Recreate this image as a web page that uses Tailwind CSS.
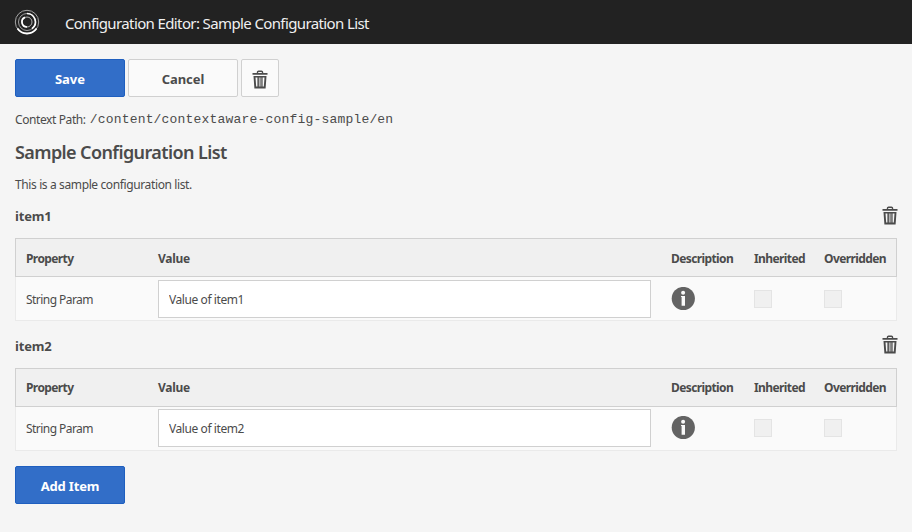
<!DOCTYPE html>
<html lang="en">
<head>
<meta charset="utf-8">
<title>Configuration Editor</title>
<script src="https://cdn.jsdelivr.net/npm/@tailwindcss/browser@4"></script>
</head>
<body class="h-[532px] overflow-hidden bg-[#f5f5f5] font-['Noto_Sans','Open_Sans',sans-serif] text-[12px] text-[#4b4b4b]">
<svg class="hidden">
  <symbol id="trash" viewBox="0 0 16 19">
    <path fill="currentColor" fill-rule="evenodd" d="M.5 3h4.300V2A1.700 1.700 0 0 1 6.500.4h3A1.700 1.700 0 0 1 11.200 2v1h4.300v1.800H.5zM6.200 3h3.600V1.900H6.200zM1.500 6h13l-.9 12.400H2.400zM3.500 7.500l.7 9h1.200v-9zm3.400 0v9h.7v-9zm1.700 0v9h.7v-9zm2 0v9h1.200l.7-9z"/>
  </symbol>
  <symbol id="info" viewBox="0 0 24 24">
    <circle cx="12.300" cy="11.500" r="11.600" fill="#636363"/>
    <circle cx="12.100" cy="5.700" r="2" fill="#fafafa"/>
    <path fill="#fafafa" d="M10 8.900h4v9.900h-3.400v-8.700H10z"/>
  </symbol>
</svg>
<header class="flex h-11 items-center bg-[#222] pl-[14px] text-[#f0f0f0]">
  <svg class="size-[26px]" viewBox="0 0 26 26" fill="none">
    <circle cx="13" cy="13" r="11.700" stroke="#a5a5a5" stroke-width="1"/>
    <path d="M3.500 19.500A11.500 11.500 0 0 0 22.500 19.500" stroke="#fff" stroke-width="1.800"/>
    <circle cx="13" cy="13" r="8.500" stroke="#a0a0a0" stroke-width="1"/>
    <path d="M13 4.500A8.500 8.500 0 0 1 18 19.800" stroke="#fff" stroke-width="1.700"/>
    <circle cx="13" cy="13" r="5" stroke="#b5b5b5" stroke-width="1"/>
    <path d="M13 18A5 5 0 0 1 11 8.400" stroke="#fff" stroke-width="1.700"/>
  </svg>
  <h1 class="ml-[25px] mt-[2px] whitespace-nowrap text-[15px] tracking-[-0.62px]">Configuration Editor: Sample Configuration List</h1>
</header>
<main class="px-[15px] pt-[15px]">
  <div class="flex gap-[3px]">
    <button class="h-[38px] w-[110px] rounded-[2px] border border-[#1f5fbf] bg-[#326ec8] pt-[3px] text-[13px] font-bold text-white">Save</button>
    <button class="h-[38px] w-[110px] rounded-[2px] border border-[#d0d0d0] bg-[#fafafa] pt-[3px] text-[13px] font-bold tracking-[-0.1px]">Cancel</button>
    <button class="flex h-[38px] w-[38px] items-center justify-center rounded-[2px] border border-[#d0d0d0] bg-[#fafafa]"><svg class="mt-[2px] h-[19px] w-4"><use href="#trash"/></svg></button>
  </div>
  <p class="mt-[13px] flex h-5 items-center whitespace-nowrap"><span class="tracking-[-0.4px]">Context Path:</span><code class="ml-[4px] font-['Liberation_Mono',monospace] text-[13px] tracking-[0.19px]">/content/contextaware-config-sample/en</code></p>
  <h2 class="mt-[8px] h-[28px] whitespace-nowrap text-[18px] font-semibold leading-[28px] tracking-[-0.6px]">Sample Configuration List</h2>
  <p class="mt-[9px] h-5 leading-5 tracking-[-0.38px]">This is a sample configuration list.</p>

  <section class="mt-[9px] h-[130px]">
    <div class="-mr-[0.5px] flex h-[34px] items-start justify-between"><h3 class="text-[13px] font-bold leading-[24px] tracking-[-0.2px]">item1</h3><svg class="mt-[2px] h-[19px] w-4"><use href="#trash"/></svg></div>
    <div class="grid h-[39px] grid-cols-[132px_513px_83px_70px_1fr] items-center border border-[#d0d0d0] bg-[#f0f0f0] pl-[10px] pt-[3px] font-bold tracking-[-0.6px]">
      <span>Property</span><span class="tracking-[-0.3px]">Value</span><span>Description</span><span>Inherited</span><span>Overridden</span>
    </div>
    <div class="grid h-[44px] grid-cols-[132px_513px_83px_70px_1fr] items-center border-x border-b border-[#eaeaea] bg-[#fafafa] pl-[10px]">
      <span class="pt-[2px] tracking-[-0.55px]">String Param</span>
      <input class="h-[38px] w-[493px] border border-[#d0d0d0] bg-white px-[10px] pt-[2px] tracking-[-0.42px]" value="Value of item1">
      <svg class="size-6 overflow-visible"><use href="#info"/></svg>
      <span class="size-[18px] border border-[#e4e4e4] bg-[#f0f0f0]"></span>
      <span class="size-[18px] border border-[#e4e4e4] bg-[#f0f0f0]"></span>
    </div>
  </section>
  <section class="h-[132px]">
    <div class="-mr-[0.5px] flex h-[34px] items-start justify-between"><h3 class="text-[13px] font-bold leading-[24px] tracking-[-0.2px]">item2</h3><svg class="mt-[1px] h-[19px] w-4"><use href="#trash"/></svg></div>
    <div class="grid h-[39px] grid-cols-[132px_513px_83px_70px_1fr] items-center border border-[#d0d0d0] bg-[#f0f0f0] pl-[10px] font-bold tracking-[-0.6px]">
      <span>Property</span><span class="tracking-[-0.3px]">Value</span><span>Description</span><span>Inherited</span><span>Overridden</span>
    </div>
    <div class="grid h-[44px] grid-cols-[132px_513px_83px_70px_1fr] items-center border-x border-b border-[#eaeaea] bg-[#fafafa] pb-[2px] pl-[10px]">
      <span class="pt-[2px] tracking-[-0.55px]">String Param</span>
      <input class="h-[38px] w-[493px] border border-[#d0d0d0] bg-white px-[10px] pt-[2px] tracking-[-0.42px]" value="Value of item2">
      <svg class="size-6 overflow-visible"><use href="#info"/></svg>
      <span class="size-[18px] border border-[#e4e4e4] bg-[#f0f0f0]"></span>
      <span class="size-[18px] border border-[#e4e4e4] bg-[#f0f0f0]"></span>
    </div>
  </section>
  <button class="h-[38px] w-[110px] rounded-[2px] border border-[#1f5fbf] bg-[#326ec8] pt-[3px] text-[13px] font-bold tracking-[-0.15px] text-white">Add Item</button>
</main>
</body>
</html>
